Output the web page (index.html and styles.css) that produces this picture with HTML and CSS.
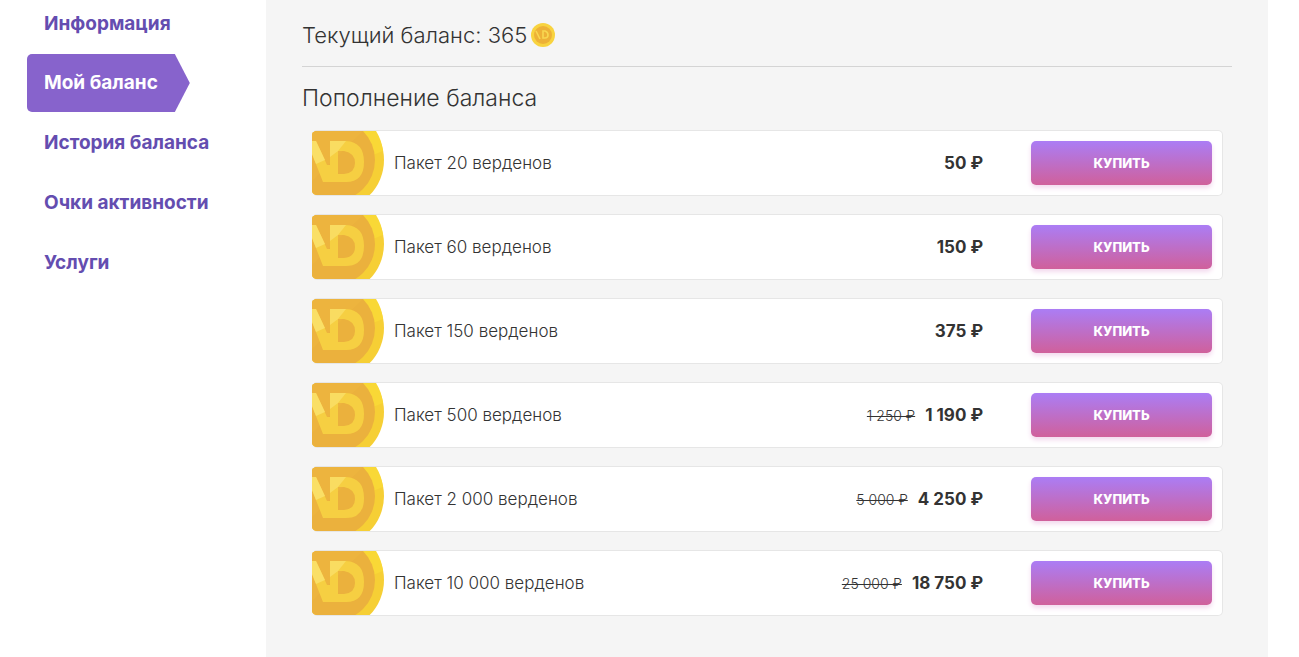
FILE: index.html
```html
<!DOCTYPE html>
<html lang="ru">
<head>
<meta charset="utf-8">
<title>Мой баланс</title>
<link rel="stylesheet" href="styles.css">
</head>
<body>
<svg class="sprite" aria-hidden="true">
  <symbol id="coin" viewBox="0 0 72 64">
    <circle cx="22" cy="29" r="50" fill="#f6cf35"/>
    <path d="M45-18A50 50 0 0 1 71 20L61 24 38-10Z" fill="#f9d836"/>
    <circle cx="22" cy="29" r="41" fill="#ebb13d"/>
    <path d="M0 0H51L0 50Z" fill="#edb43e"/>
    <path fill="#f6cf42" fill-rule="evenodd" d="M18 10H34Q52 11 52 31T34 51H11L0 23V10H4L15 34H18ZM26 20V43H32Q43 42 43 32T32 20Z"/>
    <path d="M0 10H4L13 29 4 33 0 23Z" fill="#fadf66"/>
    <path d="M18 10H34L26 20 18 26Z" fill="#f9dc61"/>
  </symbol>
  <symbol id="coin-small" viewBox="0 0 24 24">
    <circle cx="12" cy="12" r="12" fill="#f8d33f"/>
    <circle cx="12" cy="12" r="9" fill="#edb137"/>
    <path d="M5 8L9 16M12 8V15H14Q17 15 17 12T14 8Z" fill="none" stroke="#f8d750" stroke-width="1.6"/>
  </symbol>
</svg>
<div class="page">
  <nav class="menu">
    <a class="menu-link" href="#">Информация</a>
    <a class="menu-link menu-link-active" href="#" aria-current="page">Мой баланс</a>
    <a class="menu-link" href="#">История баланса</a>
    <a class="menu-link" href="#">Очки активности</a>
    <a class="menu-link" href="#">Услуги</a>
  </nav>
  <main class="content">
    <h2 class="title title-balance">Текущий баланс: 365 <svg class="coin-small" aria-hidden="true"><use href="#coin-small"/></svg></h2>
    <h2 class="title">Пополнение баланса</h2>
    <ul class="packs">
      <li class="pack"><svg class="coin" aria-hidden="true"><use href="#coin"/></svg><span class="name">Пакет 20 верденов</span><strong class="price">50 ₽</strong><button class="buy" type="button">КУПИТЬ</button></li>
      <li class="pack"><svg class="coin" aria-hidden="true"><use href="#coin"/></svg><span class="name">Пакет 60 верденов</span><strong class="price">150 ₽</strong><button class="buy" type="button">КУПИТЬ</button></li>
      <li class="pack"><svg class="coin" aria-hidden="true"><use href="#coin"/></svg><span class="name">Пакет 150 верденов</span><strong class="price">375 ₽</strong><button class="buy" type="button">КУПИТЬ</button></li>
      <li class="pack"><svg class="coin" aria-hidden="true"><use href="#coin"/></svg><span class="name">Пакет 500 верденов</span><s class="old">1 250 ₽</s><strong class="price">1 190 ₽</strong><button class="buy" type="button">КУПИТЬ</button></li>
      <li class="pack"><svg class="coin" aria-hidden="true"><use href="#coin"/></svg><span class="name">Пакет 2 000 верденов</span><s class="old">5 000 ₽</s><strong class="price">4 250 ₽</strong><button class="buy" type="button">КУПИТЬ</button></li>
      <li class="pack"><svg class="coin" aria-hidden="true"><use href="#coin"/></svg><span class="name">Пакет 10 000 верденов</span><s class="old">25 000 ₽</s><strong class="price">18 750 ₽</strong><button class="buy" type="button">КУПИТЬ</button></li>
    </ul>
  </main>
</div>
</body>
</html>
```
FILE: styles.css
```css
* {
  box-sizing: border-box;
}

body {
  margin: 0;
  background: #fff;
  color: #333;
  font-family: Inter, "Liberation Sans", sans-serif;
}

.sprite {
  display: none;
}

.page {
  display: flex;
  min-height: 100vh;
  padding-right: 31px;
}

.menu {
  flex: 0 0 266px;
  display: flex;
  flex-direction: column;
  align-items: flex-start;
  gap: 2px;
  padding-left: 27px;
}

.menu-link {
  padding: 0 32px 0 17px;
  font-size: 19px;
  font-weight: 700;
  line-height: 58px;
  color: #644db0;
  text-decoration: none;
  white-space: nowrap;
}

.menu-link:first-child {
  line-height: 48px;
  padding-bottom: 4px;
}

.menu-link-active {
  border-radius: 5px 0 0 5px;
  background: #8763cc;
  clip-path: polygon(0 0, calc(100% - 15px) 0, 100% 50%, calc(100% - 15px) 100%, 0 100%);
  color: #fff;
}

.content {
  flex: 1;
  padding: 4px 36px 40px;
  background: #f5f5f5;
}

.title {
  margin: 0;
  font-size: 23px;
  font-weight: 300;
  line-height: 62px;
}

.title-balance {
  display: flex;
  align-items: center;
  gap: 4px;
  font-size: 22px;
  border-bottom: 1px solid #d4d4d4;
}

.coin-small {
  width: 24px;
  height: 24px;
}

.packs {
  display: grid;
  gap: 18px;
  margin: 0;
  padding: 1px 9px 0 10px;
  list-style: none;
}

.pack {
  display: flex;
  align-items: center;
  height: 66px;
  padding-right: 10px;
  overflow: hidden;
  border: 1px solid #e6e6e6;
  border-left: 0;
  border-radius: 5px;
  background: #fff;
}

.coin {
  width: 72px;
  height: 64px;
  margin-right: 10px;
}

.name {
  flex: 1;
  font-size: 17px;
  font-weight: 300;
}

.old {
  margin-right: 10px;
  font-size: 14px;
  font-weight: 300;
}

.price {
  margin-right: 48px;
  font-size: 17px;
  font-weight: 700;
}

.buy {
  width: 181px;
  height: 44px;
  padding: 0;
  border: 0;
  border-radius: 5px;
  background: linear-gradient(#ab7df5, #d0609b);
  box-shadow: 0 3px 5px #f3d9ee;
  color: #fff;
  font-family: inherit;
  font-size: 13px;
  font-weight: 800;
}
```
